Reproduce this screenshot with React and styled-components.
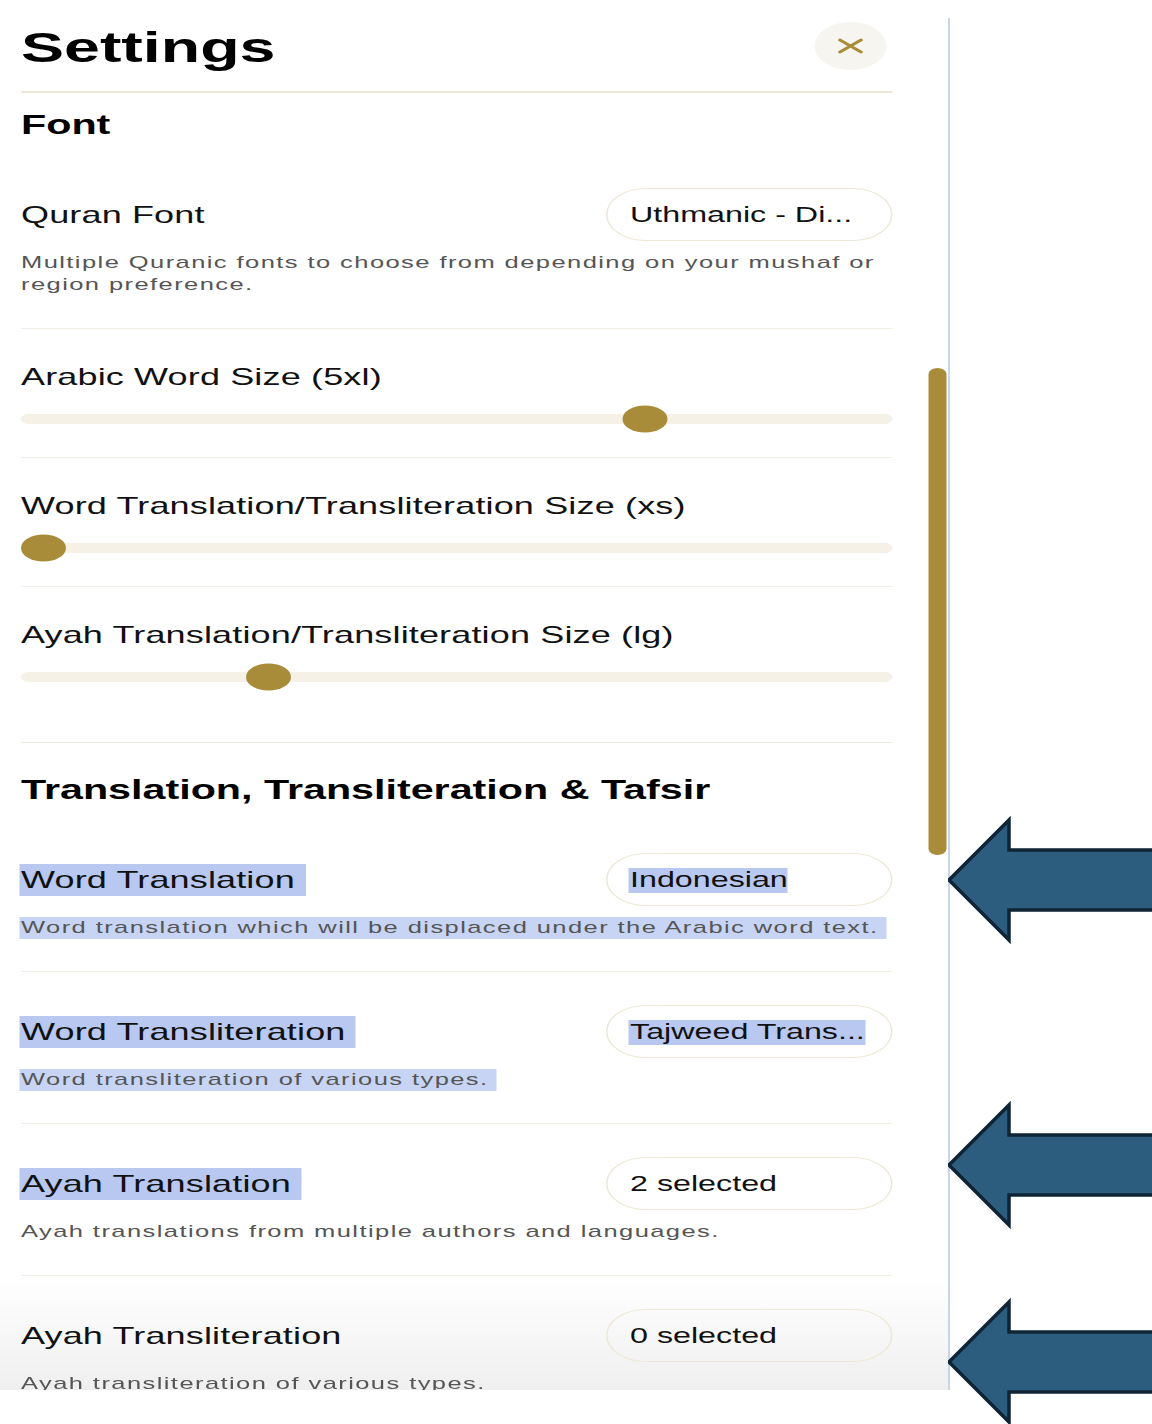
import React from 'react';
import styled, { createGlobalStyle } from 'styled-components';

const GOLD = '#a98c39';
const STRETCH = 1.5;
const SIZES = ['xs', 'sm', 'md', 'lg', 'xl', '2xl', '3xl', '4xl', '5xl', '6xl', '7xl', '8xl'];

const GlobalStyle = createGlobalStyle`
  html, body { margin: 0; padding: 0; background: #fff; }
  body { font-family: "Liberation Sans", Arial, sans-serif; color: #111; }
`;

const Page = styled.div`
  display: flex;
  width: 1152px;
  height: 1424px;
  overflow: hidden;
`;

const Frame = styled.div`
  position: relative;
  flex-shrink: 0;
  width: 948px;
  height: 1390px;
  overflow: hidden;
`;

// the whole drawer is shown stretched sideways, as in the capture
const Panel = styled.div`
  position: relative;
  box-sizing: border-box;
  width: 632px;
  height: 1390px;
  padding: 0 37px 0 14px;
  background: linear-gradient(#fff calc(100% - 110px), #efefef 100%);
  transform: scaleX(${STRETCH});
  transform-origin: left top;
`;

const Header = styled.header`
  display: flex;
  align-items: center;
  justify-content: space-between;
  height: 91px;
  border-bottom: 2px solid #ece6d6;
`;

const Title = styled.h1`
  margin: 0;
  padding-top: 3px;
  font-size: 43px;
  font-weight: 700;
  line-height: 1;
  color: #000;
`;

const CloseButton = styled.button`
  display: flex;
  align-items: center;
  justify-content: center;
  width: 48px;
  height: 48px;
  margin-right: 4px;
  padding: 0;
  border: none;
  border-radius: 50%;
  background: #f7f5ef;
`;

const Section = styled.section`
  border-bottom: ${p => (p.$open ? 'none' : '1px solid #efeadf')};
`;

const SectionTitle = styled.h2`
  margin: ${p => p.$top}px 0 14px;
  font-size: 27.5px;
  font-weight: 700;
  line-height: 32px;
  color: #000;
`;

const Block = styled.div`
  padding: 33px 0 32px;
  border-bottom: ${p => (p.$last ? 'none' : '1px solid #f2eee5')};
`;

const SliderBlock = styled.div`
  padding: 34px 0 ${p => (p.$last ? 60 : 33)}px;
  border-bottom: ${p => (p.$last ? 'none' : '1px solid #f2eee5')};
`;

const Row = styled.div`
  display: flex;
  align-items: center;
  justify-content: space-between;
  min-height: 53px;
`;

const Label = styled.div`
  font-size: 24px;
  letter-spacing: 0.1px;
  line-height: ${p => (p.$tight ? 28 : 32)}px;
  color: #111;
`;

const Mark = styled.span`
  display: inline-block;
  padding: 0 ${p => p.$pad ?? 7}px 0 1px;
  margin-left: -1px;
  background: ${p => (p.$on ? p.$tone || '#b8c8f0' : 'transparent')};
`;

const Pill = styled.div`
  box-sizing: border-box;
  display: flex;
  align-items: center;
  width: 191px;
  height: 53px;
  padding: 1px 15px 0;
  border: 1px solid #eee7d5;
  border-radius: 999px;
  background: transparent;
  font-size: 21.5px;
  white-space: nowrap;
  overflow: hidden;
  color: #111;
`;

const Desc = styled.p`
  margin: 11px 0 0;
  font-size: 17px;
  letter-spacing: 0.95px;
  line-height: 22px;
  color: #555;
`;

const Track = styled.div`
  position: relative;
  height: 10px;
  margin-top: 23px;
  border-radius: 5px;
  background: #f5f1e7;
`;

const Thumb = styled.span`
  position: absolute;
  top: 50%;
  width: 30px;
  height: 27px;
  border-radius: 50%;
  background: ${GOLD};
  transform: translateY(-50%);
`;

const Scrollbar = styled.div`
  position: absolute;
  top: 368px;
  right: 1px;
  width: 12px;
  height: 487px;
  border-radius: 6px;
  background: ${GOLD};
`;

const Aside = styled.div`
  position: relative;
  flex: 1;
`;

const Rule = styled.div`
  width: 2px;
  height: 1372px;
  margin-top: 18px;
  background: #c8d5ef;
`;

const Arrows = styled.svg`
  position: absolute;
  top: 0;
  left: 0;
`;

const XIcon = () => (
  <svg width="18" height="18" viewBox="0 0 18 18" fill="none">
    <path d="M2 3 L16 15 M16 3 L2 15" stroke={GOLD} strokeWidth="2.6" strokeLinecap="round" />
  </svg>
);

const Slider = ({ label, size, last }) => {
  const pct = SIZES.indexOf(size) / (SIZES.length - 1);
  return (
    <SliderBlock $last={last}>
      <Label $tight>{label} ({size})</Label>
      <Track>
        <Thumb style={{ left: `calc(${pct} * (100% - 30px))` }} />
      </Track>
    </SliderBlock>
  );
};

const Setting = ({ label, value, desc, marked, markValue, last }) => (
  <Block $last={last}>
    <Row>
      <Label>
        <Mark $on={marked}>{label}</Mark>
      </Label>
      <Pill>
        <Mark $on={markValue} $pad={0}>{value}</Mark>
      </Pill>
    </Row>
    <Desc>
      <Mark $on={marked && markValue} $tone="#c8d4f4" $pad={5}>{desc}</Mark>
    </Desc>
  </Block>
);

const arrow = cy =>
  `1,${cy} 61,${cy - 60} 61,${cy - 30} 210,${cy - 30} 210,${cy + 30} 61,${cy + 30} 61,${cy + 60}`;

export default function App() {
  return (
    <Page>
      <GlobalStyle />
      <Frame>
        <Panel>
          <Header>
            <Title>Settings</Title>
            <CloseButton aria-label="Close">
              <XIcon />
            </CloseButton>
          </Header>

          <Section>
            <SectionTitle $top={16}>Font</SectionTitle>
            <Setting
              label="Quran Font"
              value="Uthmanic - Di..."
              desc="Multiple Quranic fonts to choose from depending on your mushaf or region preference."
            />
            <Slider label="Arabic Word Size" size="5xl" />
            <Slider label="Word Translation/Transliteration Size" size="xs" />
            <Slider label="Ayah Translation/Transliteration Size" size="lg" last />
          </Section>

          <Section $open>
            <SectionTitle $top={31}>Translation, Transliteration &amp; Tafsir</SectionTitle>
            <Setting
              label="Word Translation"
              value="Indonesian"
              desc="Word translation which will be displaced under the Arabic word text."
              marked
              markValue
            />
            <Setting
              label="Word Transliteration"
              value="Tajweed Trans..."
              desc="Word transliteration of various types."
              marked
              markValue
            />
            <Setting
              label="Ayah Translation"
              value="2 selected"
              desc="Ayah translations from multiple authors and languages."
              marked
            />
            <Setting
              label="Ayah Transliteration"
              value="0 selected"
              desc="Ayah transliteration of various types."
              last
            />
          </Section>

          <Scrollbar />
        </Panel>
      </Frame>
      <Aside>
        <Rule />
        <Arrows width="204" height="1424" viewBox="0 0 204 1424">
          {[880, 1165, 1362].map(cy => (
            <polygon key={cy} points={arrow(cy)} fill="#2c5d7f" stroke="#0f2435" strokeWidth="3.5" strokeLinejoin="miter" />
          ))}
        </Arrows>
      </Aside>
    </Page>
  );
}
